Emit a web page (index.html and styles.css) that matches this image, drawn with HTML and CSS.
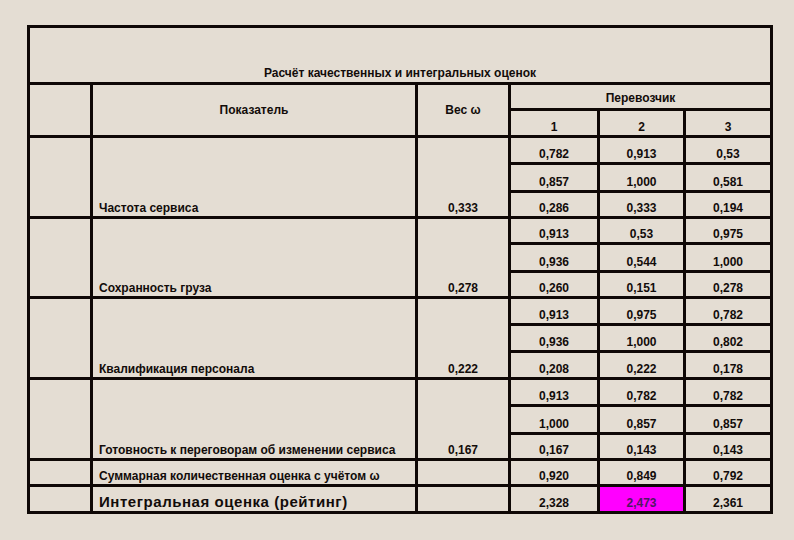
FILE: index.html
```html
<!DOCTYPE html>
<html lang="ru">
<head>
<meta charset="utf-8">
<title>Расчёт качественных и интегральных оценок</title>
<link rel="stylesheet" href="styles.css">
</head>
<body>
<div class="sheet">
  <div class="cell title">Расчёт качественных и интегральных оценок</div>

  <div class="cell side hdr"></div>
  <div class="cell center hdr">Показатель</div>
  <div class="cell center hdr">Вес ω</div>
  <div class="cell num carrier">Перевозчик</div>
  <div class="cell num">1</div>
  <div class="cell num">2</div>
  <div class="cell num">3</div>

  <div class="cell side grp"></div>
  <div class="cell label grp">Частота сервиса</div>
  <div class="cell num grp">0,333</div>
  <div class="cell num">0,782</div><div class="cell num">0,913</div><div class="cell num">0,53</div>
  <div class="cell num">0,857</div><div class="cell num">1,000</div><div class="cell num">0,581</div>
  <div class="cell num">0,286</div><div class="cell num">0,333</div><div class="cell num">0,194</div>

  <div class="cell side grp"></div>
  <div class="cell label grp">Сохранность груза</div>
  <div class="cell num grp">0,278</div>
  <div class="cell num">0,913</div><div class="cell num">0,53</div><div class="cell num">0,975</div>
  <div class="cell num">0,936</div><div class="cell num">0,544</div><div class="cell num">1,000</div>
  <div class="cell num">0,260</div><div class="cell num">0,151</div><div class="cell num">0,278</div>

  <div class="cell side grp"></div>
  <div class="cell label grp">Квалификация персонала</div>
  <div class="cell num grp">0,222</div>
  <div class="cell num">0,913</div><div class="cell num">0,975</div><div class="cell num">0,782</div>
  <div class="cell num">0,936</div><div class="cell num">1,000</div><div class="cell num">0,802</div>
  <div class="cell num">0,208</div><div class="cell num">0,222</div><div class="cell num">0,178</div>

  <div class="cell side grp"></div>
  <div class="cell label grp">Готовность к переговорам об изменении сервиса</div>
  <div class="cell num grp">0,167</div>
  <div class="cell num">0,913</div><div class="cell num">0,782</div><div class="cell num">0,782</div>
  <div class="cell num">1,000</div><div class="cell num">0,857</div><div class="cell num">0,857</div>
  <div class="cell num">0,167</div><div class="cell num">0,143</div><div class="cell num">0,143</div>

  <div class="cell side"></div>
  <div class="cell label">Суммарная количественная оценка с учётом ω</div>
  <div class="cell num"></div>
  <div class="cell num">0,920</div><div class="cell num">0,849</div><div class="cell num">0,792</div>

  <div class="cell side"></div>
  <div class="cell label big">Интегральная оценка (рейтинг)</div>
  <div class="cell num"></div>
  <div class="cell num">2,328</div><div class="cell num best">2,473</div><div class="cell num">2,361</div>
</div>
</body>
</html>
```

FILE: styles.css
```css
html, body {
  margin: 0;
  padding: 0;
}

body {
  background: #e4ddd3;
  font-family: "Liberation Sans", Arial, sans-serif;
  font-size: 12px;
  font-weight: bold;
  color: #120c0a;
  width: 794px;
  height: 540px;
  overflow: hidden;
}

.sheet {
  display: grid;
  grid-template-columns: 60px 322px 90px 86px 83px 84px;
  grid-template-rows: 54px 23px 24px 24px 25px 23px 23px 25px 23px 24px 24px 24px 24px 25px 23px 23px 24px;
  gap: 3px;
  padding: 3px;
  background: #0f0806;
  width: max-content;
  margin: 25px 0 0 27px;
}

.cell {
  background: #e4ddd3;
  display: flex;
  align-items: flex-end;
  line-height: 14px;
  padding-bottom: 1px;
  box-sizing: border-box;
  min-width: 0;
  white-space: nowrap;
}

.title {
  grid-column: span 6;
  justify-content: center;
  padding-bottom: 2px;
}

.hdr {
  grid-row: span 2;
}

.center {
  justify-content: center;
  align-items: center;
  padding-bottom: 0;
}

.carrier {
  grid-column: span 3;
  padding-bottom: 3px;
}

.num {
  justify-content: center;
}

.grp {
  grid-row: span 3;
}

.label {
  padding-left: 6px;
}

.big {
  font-size: 15px;
  line-height: 17px;
  letter-spacing: 0.55px;
}

.best {
  background: #ff00ff;
  color: #4e1a62;
}
```
